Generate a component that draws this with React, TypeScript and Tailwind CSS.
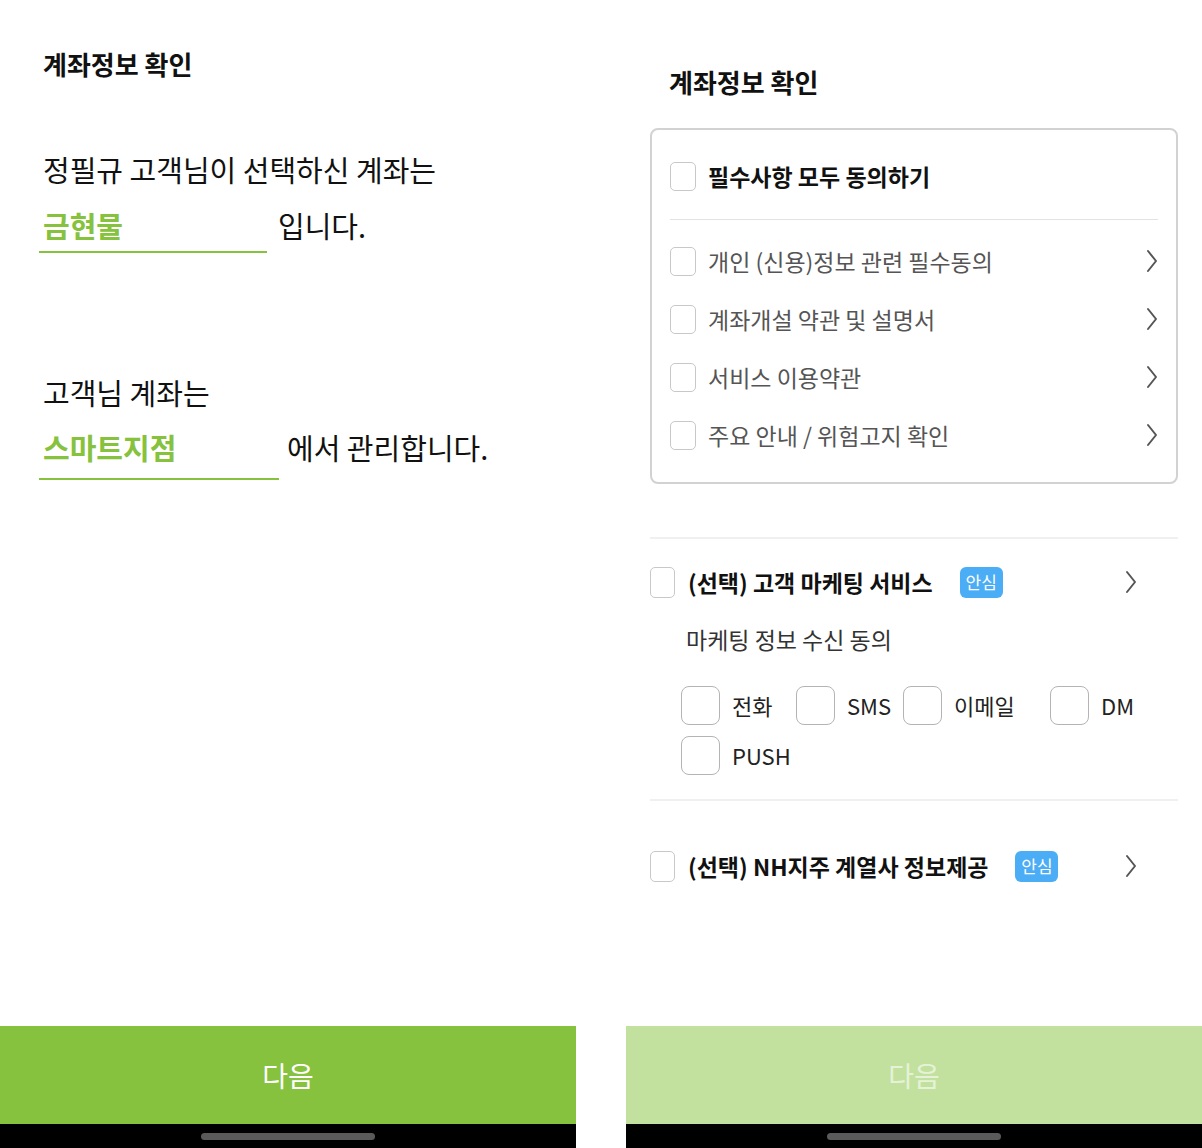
import React from 'react';

const FONT = { fontFamily: '"Noto Sans CJK KR", "Noto Sans", sans-serif' };

function Chevron({ className = "" }: { className?: string }) {
  return (
    <svg className={className} width="12" height="24" viewBox="0 0 12 24" fill="none">
      <polyline points="2,2 10,12 2,22" stroke="#555" strokeWidth="2" strokeLinecap="round" strokeLinejoin="round" />
    </svg>
  );
}

function Box({ className = "" }: { className?: string }) {
  return <div className={`shrink-0 bg-white ${className}`} />;
}

function Badge() {
  return (
    <span className="flex h-[31px] w-[43px] items-center justify-center rounded-[6px] bg-[#4badf5] text-[17px] text-white">
      안심
    </span>
  );
}

function BottomBar({ light = false }: { light?: boolean }) {
  return (
    <div className="flex flex-col">
      <div
        className={`flex h-[98px] items-center justify-center text-[28px] ${
          light ? "bg-[#c2e19e] text-[#e6f2d8]" : "bg-[#86c23e] text-white"
        }`}
      >
        다음
      </div>
      <div className="flex h-[24px] items-center justify-center bg-black">
        <div className="h-[7px] w-[174px] rounded-full bg-[#5a5a5a]" />
      </div>
    </div>
  );
}

function LeftScreen() {
  return (
    <div className="flex h-[1148px] w-[576px] flex-col">
      <div className="flex-1 pl-[43px] text-[#111]">
        <div className="pt-[46px] text-[26px] font-bold leading-[36px]">계좌정보 확인</div>

        <div className="mt-[67px] text-[29px] leading-[40px]">정필규 고객님이 선택하신 계좌는</div>
        <div className="mt-[16px] flex items-start text-[29px] leading-[40px]">
          <div className="-ml-[4px] h-[48px] w-[228px] border-b-2 border-[#86c23e] pl-[4px] font-bold text-[#86c23e]">
            금현물
          </div>
          <div className="ml-[11px]">입니다.</div>
        </div>

        <div className="mt-[119px] text-[29px] leading-[40px]">고객님 계좌는</div>
        <div className="mt-[15px] flex items-start text-[29px] leading-[40px]">
          <div className="-ml-[4px] h-[53px] w-[240px] border-b-2 border-[#86c23e] pl-[4px] font-bold text-[#86c23e]">
            스마트지점
          </div>
          <div className="ml-[8px]">에서 관리합니다.</div>
        </div>
      </div>
      <BottomBar />
    </div>
  );
}

const required = [
  "개인 (신용)정보 관련 필수동의",
  "계좌개설 약관 및 설명서",
  "서비스 이용약관",
  "주요 안내 / 위험고지 확인",
];

const channels = [
  { label: "전화", w: "w-[115px]" },
  { label: "SMS", w: "w-[107px]" },
  { label: "이메일", w: "w-[147px]" },
  { label: "DM", w: "w-[100px]" },
  { label: "PUSH", w: "w-[120px]" },
];

function RightScreen() {
  return (
    <div className="flex h-[1148px] w-[576px] flex-col">
      <div className="flex-1 px-[24px]">
        <div className="pl-[19px] pt-[64px] text-[26px] font-bold leading-[36px] text-[#111]">계좌정보 확인</div>

        <div className="mt-[28px] rounded-[8px] border-2 border-[#d2d2d2] px-[18px] pb-[18px] pt-[18px]">
          <div className="flex h-[56px] items-center gap-[12px]">
            <Box className="h-[29px] w-[26px] rounded-[5px] border-[1.5px] border-[#c8c8c8]" />
            <span className="text-[23px] font-bold text-[#111]">필수사항 모두 동의하기</span>
          </div>
          <div className="mt-[15px] h-px bg-[#e2e2e2]" />
          <div className="mt-[12px]">
            {required.map((t) => (
              <div key={t} className="flex h-[58px] items-center gap-[12px]">
                <Box className="h-[29px] w-[26px] rounded-[5px] border-[1.5px] border-[#c8c8c8]" />
                <span className="flex-1 text-[23px] text-[#555]">{t}</span>
                <Chevron />
              </div>
            ))}
          </div>
        </div>

        <div className="mt-[53px] h-[2px] bg-[#f0f0f0]" />

        <div className="mt-[27px] flex h-[32px] items-center pr-[41px]">
          <Box className="h-[31px] w-[25px] rounded-[5px] border-[1.5px] border-[#c8c8c8]" />
          <span className="ml-[13px] text-[23px] font-bold text-[#111]">(선택) 고객 마케팅 서비스</span>
          <span className="ml-[27px]"><Badge /></span>
          <span className="flex-1" />
          <Chevron />
        </div>

        <div className="mt-[24px] pl-[36px] text-[23px] leading-[34px] text-[#333]">마케팅 정보 수신 동의</div>

        <div className="mt-[30px] flex flex-wrap gap-y-[11px] pl-[31px]">
          {channels.map((c) => (
            <div key={c.label} className={`flex items-center gap-[12px] ${c.w}`}>
              <Box className="h-[39px] w-[39px] rounded-[8px] border-[1.5px] border-[#b4b4b4]" />
              <span className="text-[22px] text-[#222]">{c.label}</span>
            </div>
          ))}
        </div>

        <div className="mt-[24px] h-[2px] bg-[#f0f0f0]" />

        <div className="mt-[49px] flex h-[32px] items-center pr-[41px]">
          <Box className="h-[31px] w-[25px] rounded-[5px] border-[1.5px] border-[#c8c8c8]" />
          <span className="ml-[13px] text-[23px] font-bold text-[#111]">(선택) NH지주 계열사 정보제공</span>
          <span className="ml-[27px]"><Badge /></span>
          <span className="flex-1" />
          <Chevron />
        </div>
      </div>
      <div className="pt-px">
        <BottomBar light />
      </div>
    </div>
  );
}

export default function App() {
  return (
    <div className="flex h-[1148px] w-[1202px] gap-[50px] overflow-hidden bg-white" style={FONT}>
      <LeftScreen />
      <RightScreen />
    </div>
  );
}
